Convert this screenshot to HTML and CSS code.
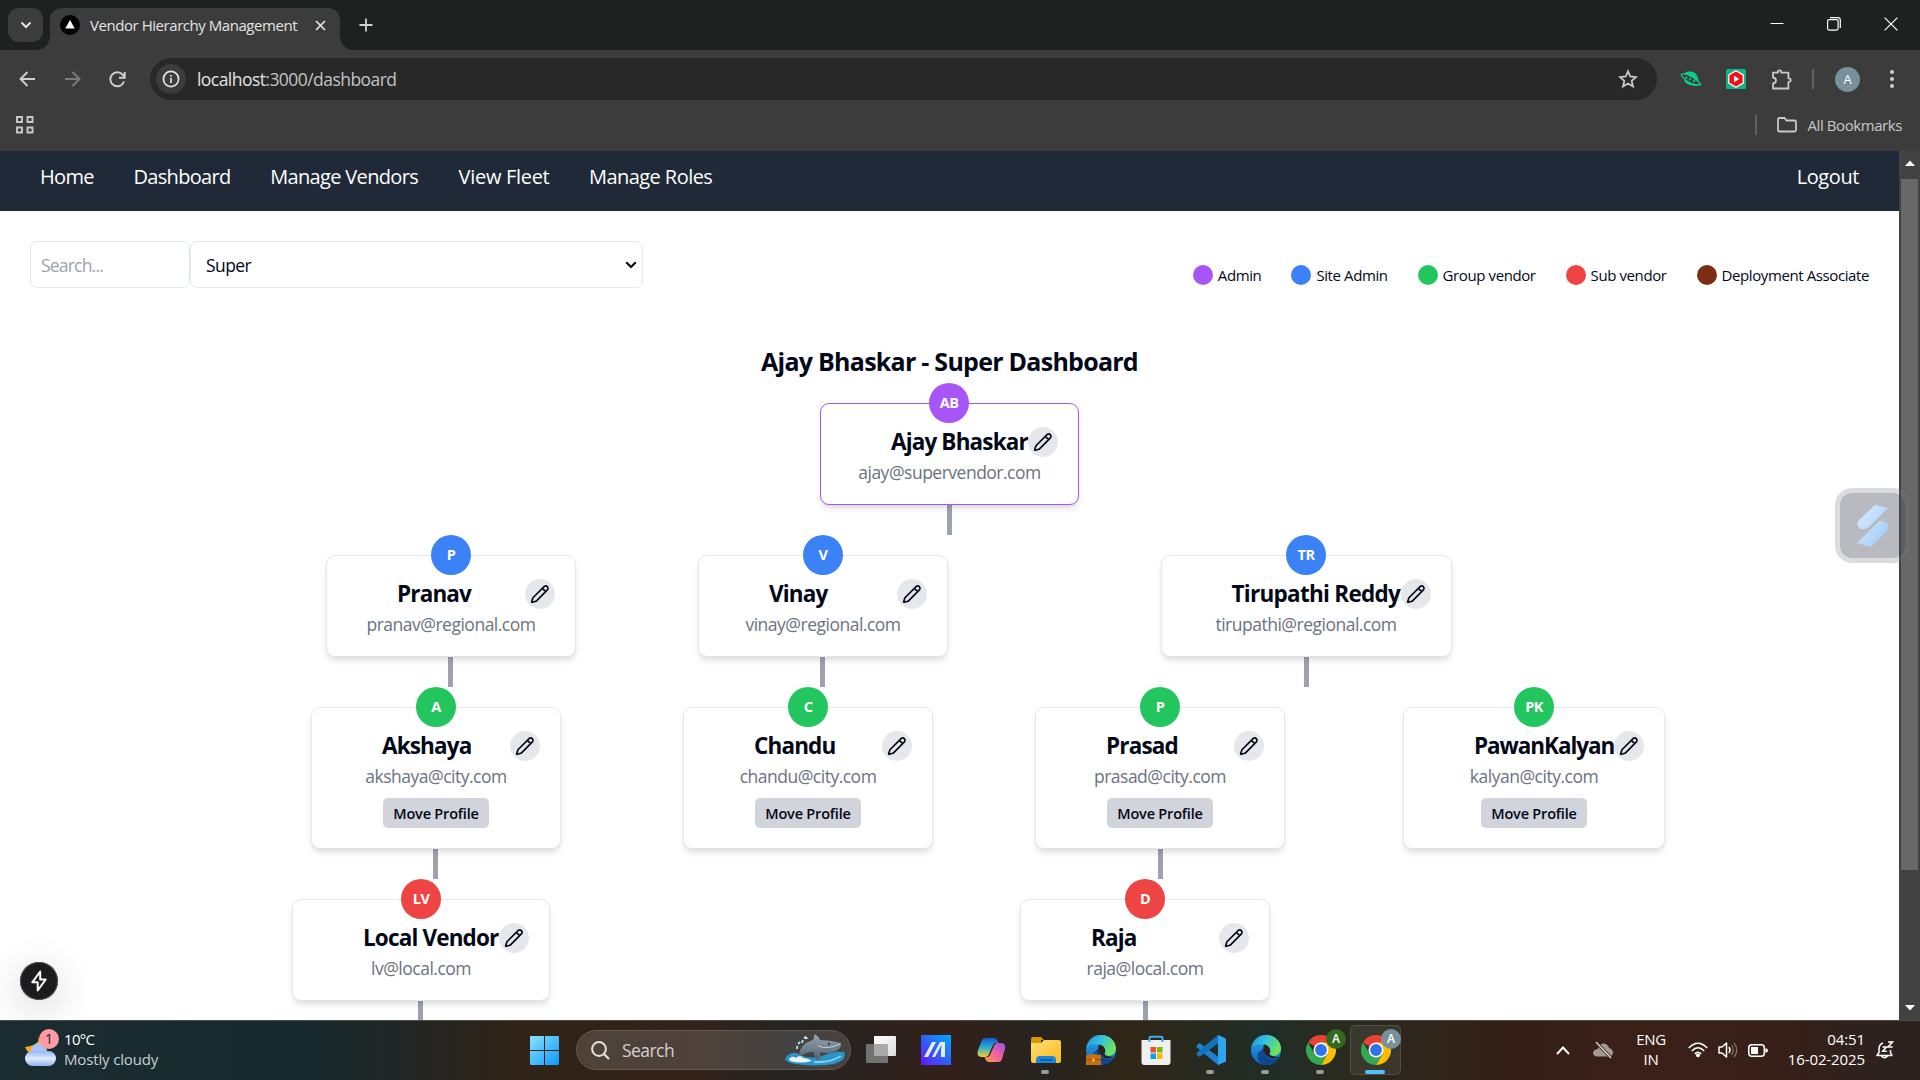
FILE: index.html
```
<!DOCTYPE html>
<html lang="en">
<head>
<meta charset="utf-8">
<title>Vendor Hierarchy Management</title>
<link rel="stylesheet" href="styles.css">
</head>
<body>
<svg class="defs" aria-hidden="true">
  <defs>
    <linearGradient id="win" x1="0" y1="0" x2="1" y2="1"><stop offset="0" stop-color="#8be3ff"/><stop offset="1" stop-color="#0a98ff"/></linearGradient>
    <linearGradient id="sky" x1="0" y1="0" x2="1" y2="1"><stop offset="0" stop-color="#dceeff"/><stop offset="1" stop-color="#9cc8f8"/></linearGradient>
    <linearGradient id="cloud" x1="0" y1="0" x2="0" y2="1"><stop offset="0" stop-color="#8fb6f3"/><stop offset=".5" stop-color="#e1ebfb"/><stop offset="1" stop-color="#8fb2ef"/></linearGradient>
    <linearGradient id="mapp" x1="0" y1="1" x2="1" y2="0"><stop offset="0" stop-color="#6418ff"/><stop offset=".5" stop-color="#2f61f6"/><stop offset="1" stop-color="#00aaff"/></linearGradient>
    <linearGradient id="cpa" x1="0" y1="0" x2="0" y2="1"><stop offset="0" stop-color="#1c56cf"/><stop offset=".45" stop-color="#23a9d8"/><stop offset="1" stop-color="#f1cf2c"/></linearGradient>
    <linearGradient id="cpb" x1="1" y1="0" x2="0" y2="1"><stop offset="0" stop-color="#9c4df0"/><stop offset=".5" stop-color="#f0619b"/><stop offset="1" stop-color="#ff9d4a"/></linearGradient>
    <linearGradient id="fold" x1="0" y1="0" x2="1" y2="1"><stop offset="0" stop-color="#ffdf73"/><stop offset="1" stop-color="#fcb91e"/></linearGradient>
    <linearGradient id="edgea" x1="0" y1="0" x2="1" y2=".4"><stop offset="0" stop-color="#1a8fe0"/><stop offset=".5" stop-color="#35c1e0"/><stop offset="1" stop-color="#6be35c"/></linearGradient>
    <linearGradient id="edgeb" x1="0" y1="0" x2="0" y2="1"><stop offset="0" stop-color="#2ea9e6"/><stop offset="1" stop-color="#0f63c0"/></linearGradient>
    <linearGradient id="whale" x1="0" y1="0" x2="0" y2="1"><stop offset="0" stop-color="#9aa6b2"/><stop offset="1" stop-color="#51606e"/></linearGradient>
    <linearGradient id="view" x1="0" y1="0" x2="1" y2="1"><stop offset="0" stop-color="#ffffff"/><stop offset="1" stop-color="#dcdcdc"/></linearGradient>
    <symbol id="pencil" viewBox="0 0 24 24"><path d="M21.17 6.81a2.9 2.9 0 0 0-4-4L3.84 16.17a2 2 0 0 0-.5.83l-1.32 4.35a.5.5 0 0 0 .62.62L7 20.66a2 2 0 0 0 .83-.5zM14.8 5.2l4 4" fill="none" stroke="#020817" stroke-width="2" stroke-linecap="round" stroke-linejoin="round"/></symbol>
    <symbol id="edge" viewBox="0 0 30 30"><circle cx="15" cy="15" r="15" fill="url(#edgeb)"/><path d="M9.5 15.5C8 23 15 29 25.500 25.700A15 15 0 0 1 12 29.700C6 27 4 19 9.500 15.500z" fill="#104f9c"/><path d="M13 29.900C7 27 7 20 10 16C11 14 13.500 13 15.500 13.500C11 18 14.500 25 26 23.500L28.700 22Q24 30 13 29.900z" fill="#0e478f"/><path d="M.3 12.500C2 4.500 8.500 0 15.500 0C24 0 30 6.500 30 13.500C30 18 26.500 21 22.500 21C19 21 18 19.500 18.700 18C20.500 14.500 17 9.500 11 9.300C6 9.200 2 11 .3 12.500z" fill="url(#edgea)"/><path d="M18.700 18C20.500 15 18 10 13 9.500C12 12 11.500 16 15 20.500Q20 25 28.500 22Q24 22 20 20.500Q17.900 19.600 18.700 18z" fill="#2b221d"/></symbol>
    <symbol id="chrome" viewBox="0 0 30 30"><path d="M15 15L2 7.500A15 15 0 0 1 28 7.500z" fill="#ea4335"/><path d="M15 7.500H28A15 15 0 0 1 15 30L21.500 18.750z" fill="#fbbc04"/><path d="M8.500 18.750L2 7.500A15 15 0 0 0 15 30L21.500 18.750z" fill="#34a853"/><circle cx="15" cy="15" r="7.500" fill="#fff"/><circle cx="15" cy="15" r="5.900" fill="#2f73e8"/></symbol>
  </defs>
</svg>

<div class="screen">
  <header class="browser">
    <div class="tabstrip">
      <button class="tab-list"><svg width="12" height="8" viewBox="0 0 12 8"><path d="M1.500 1.500L6 6l4.500-4.500" fill="none" stroke="#e3e3e3" stroke-width="2"/></svg></button>
      <div class="tab">
        <svg class="favicon" width="20" height="20" viewBox="0 0 20 20"><circle cx="10" cy="10" r="10"/><path d="M10 5l4.800 8.400H5.200z" fill="#fff"/></svg>
        <span class="tab-title">Vendor Hierarchy Management</span>
        <svg class="tab-close" width="11" height="11" viewBox="0 0 11 11"><path d="M1 1l9 9M10 1l-9 9" stroke="#e3e3e3" stroke-width="1.700"/></svg>
      </div>
      <svg class="tab-new" width="14" height="14" viewBox="0 0 14 14"><path d="M7 .5v13M.5 7h13" stroke="#d0d0d0" stroke-width="1.800"/></svg>
      <div class="window-controls">
        <svg width="14" height="14" viewBox="0 0 14 14"><path d="M.5 6.500h13" stroke="#fff"/></svg>
        <svg width="14" height="14" viewBox="0 0 14 14"><rect x=".6" y="2.600" width="10.500" height="10.500" rx="1.500" fill="none" stroke="#fff" stroke-width="1.200"/><path d="M3 .6h8q2.300 0 2.300 2.300v8" fill="none" stroke="#fff" stroke-width="1.200"/></svg>
        <svg width="14" height="14" viewBox="0 0 14 14"><path d="M.6.600l12.800 12.800M13.400.600L.6 13.400" stroke="#fff" stroke-width="1.200"/></svg>
      </div>
    </div>
    <div class="toolbar">
      <svg class="nav-ico" width="17" height="16" viewBox="0 0 17 16"><path d="M16 8H1.500M8.500 1L1.500 8l7 7" fill="none" stroke="#d0d0d0" stroke-width="1.900"/></svg>
      <svg class="nav-ico" width="17" height="16" viewBox="0 0 17 16"><path d="M1 8h14.500M8.500 1l7 7-7 7" fill="none" stroke="#7c7c7c" stroke-width="1.900"/></svg>
      <svg class="nav-ico" width="17" height="17" viewBox="0 0 17 17"><path d="M15 10.500A7 7 0 1 1 13.700 3.700L15.500 6M15.700 1v5.800H10" fill="none" stroke="#d0d0d0" stroke-width="1.900"/></svg>
      <div class="address">
        <span class="site-info"><svg width="18" height="18" viewBox="0 0 18 18"><circle cx="9" cy="9" r="7.600" fill="none" stroke="#e3e3e3" stroke-width="1.700"/><path d="M9 8v5M9 5v1.700" stroke="#e3e3e3" stroke-width="1.700"/></svg></span>
        <span class="url">localhost<span>:3000/dashboard</span></span>
        <svg class="star" width="20" height="20" viewBox="0 0 20 20"><path d="M10 2.300l2.300 5.200 5.700.6-4.300 3.800 1.300 5.600-5-3-5 3 1.300-5.600L2 8.100l5.700-.6z" fill="none" stroke="#c8c8c8" stroke-width="1.800"/></svg>
      </div>
      <div class="extensions">
        <svg width="22" height="16" viewBox="0 0 22 16"><path d="M4 4Q4.500.800 9 .600Q17 0 18.500 9L20 14Q15 16 8.500 13.500Q4 11.500 4 8z" fill="#0fc98c"/><path d="M1.200 3.500Q4.500 1.500 13 6.500Q19 10.500 20.800 13.700Q14 14.500 7 10Q1.500 6 1.200 3.500z" fill="#3c3c3c" stroke="#0fc98c" stroke-width="1.300"/><path d="M5.500 5.500l1.500 2M9.500 7l1 2.200M13.500 9l1 2" stroke="#0fc98c" stroke-width="1.800"/></svg>
        <svg class="ext-video" width="20" height="20" viewBox="0 0 20 20"><rect width="20" height="20" rx="1.500" fill="#0fb389"/><path d="M10 1.800l7.200 4.100v8.200L10 18.200l-7.200-4.100V5.900z" fill="#f50d17" stroke="#fff" stroke-width="1.200"/><path d="M8 6.800l5.300 3.200L8 13.200z" fill="#fff"/></svg>
        <svg class="ext-menu" width="21" height="21" viewBox="0 0 21 21"><path d="M2 3.700h4.800v-.5a1.800 1.800 0 0 1 3.600 0v.5h7v5.700h.5a1.800 1.800 0 0 1 0 3.600h-.5v6.500H2v-5q3-.4 3-3t-3-3z" fill="none" stroke="#c8c8c8" stroke-width="1.800" stroke-linejoin="round"/></svg>
        <i class="divider"></i>
        <span class="profile">A</span>
        <svg width="4" height="18" viewBox="0 0 4 18"><g fill="#d0d0d0"><circle cx="2" cy="2" r="2"/><circle cx="2" cy="9" r="2"/><circle cx="2" cy="16" r="2"/></g></svg>
      </div>
    </div>
    <div class="bookmarks">
      <svg width="20" height="20" viewBox="0 0 20 20"><g fill="none" stroke="#c8c8c8" stroke-width="1.900"><path d="M2 2h5v5H2zM12.500 2h5v5h-5zM2 12.500h5v5H2zM12.500 12.500h5v5h-5z"/></g></svg>
      <div class="all-bookmarks">
        <i class="divider"></i>
        <svg width="20" height="16" viewBox="0 0 20 16"><path d="M1 2.500Q1 1 2.500 1h5l2 2.500h8q1.500 0 1.500 1.500v8q0 1.500-1.500 1.500h-15Q1 14.500 1 13z" fill="none" stroke="#c8c8c8" stroke-width="1.800"/></svg>
        <span>All Bookmarks</span>
      </div>
    </div>
  </header>

  <div class="viewport">
    <main class="page">
      <nav class="navbar">
        <a>Home</a><a>Dashboard</a><a>Manage Vendors</a><a class="fleet">View Fleet</a><a>Manage Roles</a>
        <a class="logout">Logout</a>
      </nav>
      <section class="filters">
        <div class="search">Search...</div>
        <div class="select">Super<svg width="12" height="8" viewBox="0 0 12 8"><path d="M1.200 1.200L6 6l4.800-4.800" fill="none" stroke="#020817" stroke-width="2.200"/></svg></div>
        <ul class="legend">
          <li><i class="purple"></i>Admin</li>
          <li><i class="blue"></i>Site Admin</li>
          <li><i class="green"></i>Group vendor</li>
          <li><i class="red"></i>Sub vendor</li>
          <li><i class="brown"></i>Deployment Associate</li>
        </ul>
      </section>
      <h1>Ajay Bhaskar - Super Dashboard</h1>

      <div class="tree">
        <article class="card card-root">
          <span class="badge purple">AB</span>
          <div class="name"><h2>Ajay Bhaskar</h2><button class="edit"><svg><use href="#pencil"/></svg></button></div>
          <p>ajay@supervendor.com</p>
        </article>
        <i class="link"></i>

        <div class="regions">
          <div class="branch branch-pranav">
            <article class="card">
              <span class="badge blue">P</span>
              <div class="name"><h2>Pranav</h2><button class="edit"><svg><use href="#pencil"/></svg></button></div>
              <p>pranav@regional.com</p>
            </article>
            <i class="link"></i>
            <div class="children">
              <div class="branch">
                <article class="card tall">
                  <span class="badge green">A</span>
                  <div class="name"><h2>Akshaya</h2><button class="edit"><svg><use href="#pencil"/></svg></button></div>
                  <p>akshaya@city.com</p>
                  <button class="move">Move Profile</button>
                </article>
                <i class="link"></i>
                <div class="children">
                  <div class="branch">
                    <article class="card card-local">
                      <span class="badge red">LV</span>
                      <div class="name"><h2>Local Vendor</h2><button class="edit"><svg><use href="#pencil"/></svg></button></div>
                      <p>lv@local.com</p>
                    </article>
                    <i class="link"></i>
                  </div>
                </div>
              </div>
            </div>
          </div>

          <div class="branch branch-vinay">
            <article class="card">
              <span class="badge blue">V</span>
              <div class="name"><h2>Vinay</h2><button class="edit"><svg><use href="#pencil"/></svg></button></div>
              <p>vinay@regional.com</p>
            </article>
            <i class="link"></i>
            <div class="children">
              <div class="branch">
                <article class="card tall">
                  <span class="badge green">C</span>
                  <div class="name"><h2>Chandu</h2><button class="edit"><svg><use href="#pencil"/></svg></button></div>
                  <p>chandu@city.com</p>
                  <button class="move">Move Profile</button>
                </article>
              </div>
            </div>
          </div>

          <div class="branch branch-reddy">
            <article class="card card-reddy">
              <span class="badge blue">TR</span>
              <div class="name"><h2>Tirupathi Reddy</h2><button class="edit"><svg><use href="#pencil"/></svg></button></div>
              <p>tirupathi@regional.com</p>
            </article>
            <i class="link"></i>
            <div class="siblings">
              <div class="branch branch-prasad">
                <article class="card tall">
                  <span class="badge green">P</span>
                  <div class="name"><h2>Prasad</h2><button class="edit"><svg><use href="#pencil"/></svg></button></div>
                  <p>prasad@city.com</p>
                  <button class="move">Move Profile</button>
                </article>
                <i class="link"></i>
                <div class="children">
                  <div class="branch">
                    <article class="card">
                      <span class="badge red">D</span>
                      <div class="name"><h2>Raja</h2><button class="edit"><svg><use href="#pencil"/></svg></button></div>
                      <p>raja@local.com</p>
                    </article>
                    <i class="link"></i>
                  </div>
                </div>
              </div>
              <div class="branch">
                <article class="card tall card-kalyan">
                  <span class="badge green">PK</span>
                  <div class="name"><h2>PawanKalyan</h2><button class="edit"><svg><use href="#pencil"/></svg></button></div>
                  <p>kalyan@city.com</p>
                  <button class="move">Move Profile</button>
                </article>
              </div>
            </div>
          </div>
        </div>
      </div>
      <button class="dev-tools"><svg width="16" height="22" viewBox="0 0 16 22"><path d="M9.200 1.500L1.300 12.300h5.400v8.200l8-11H9.200z" fill="none" stroke="#fff" stroke-width="2" stroke-linejoin="round"/></svg></button>
    </main>
    <div class="scrollbar">
      <svg width="10" height="6" viewBox="0 0 10 6"><path d="M0 6l5-5.500L10 6z" fill="#fff"/></svg>
      <i></i>
      <svg width="10" height="6" viewBox="0 0 10 6"><path d="M0 0l5 5.500L10 0z" fill="#fff"/></svg>
    </div>
    <div class="widget"><svg width="32" height="42" viewBox="0 0 32 42"><path d="M18 0L31 3L12 22Q9 25 4 24Q-1 21 1 16zM22 16Q30 16 31 20Q31 25 28 28L14 42L0 38z" fill="url(#sky)"/></svg></div>
  </div>

  <footer class="taskbar">
    <div class="weather">
      <svg width="32" height="34" viewBox="0 0 32 34"><path d="M12 1Q18 12 0 14Q3 22 12 22Q20 16 12 1z" fill="#f7a81d"/><circle cx="14" cy="18" r="8" fill="#a9c5f5"/><rect x="0" y="18" width="31" height="15" rx="7.500" fill="url(#cloud)"/></svg>
      <span class="count">1</span>
      <div><b>10°C</b><span>Mostly cloudy</span></div>
    </div>
    <svg class="start" width="29" height="29" viewBox="0 0 29 29"><path d="M0 1Q0 0 1 0h13v14H0zM15 0h13q1 0 1 1v13H15zM0 15h14v14H1q-1 0-1-1zM15 15h14v13q0 1-1 1H15z" fill="url(#win)"/></svg>
    <div class="taskbar-search">
      <svg width="19" height="19" viewBox="0 0 19 19"><circle cx="8" cy="8" r="6.900" fill="none" stroke="#e6e2df" stroke-width="2"/><path d="M13 13l5 5" stroke="#e6e2df" stroke-width="2.200"/></svg>
      <span>Search</span>
      <svg class="whale" width="62" height="32" viewBox="0 0 62 32"><path d="M1 25Q6 16 15 20Q25 26 38 22Q50 17 60 18Q64 26 50 30Q30 33 12 30Q3 29 1 25z" fill="#2a93c8"/><path d="M15 23Q15 10 29 6Q31 2 30 0Q35 2 36 6Q46 6 57 9Q58 15 50 18Q44 20 36 18Q38 25 33 26Q29 20 30 18Q22 18 15 23z" fill="url(#whale)"/><path d="M34 12Q44 16 56 10" fill="none" stroke="#c6ced6"/><circle cx="45" cy="10" r="1" fill="#222"/><path d="M5 25q3-4 7-1q4-4 7 0q5 0 9 3q-12 3-22 0z" fill="#e8f6fb"/><path d="M13 15q0-5 4-8M18 9q1-5 5-7M21 3l3 2" fill="none" stroke="#bfe4f2" stroke-width="1.800" stroke-dasharray="3 2"/><path d="M30 28Q46 29 57 22" fill="none" stroke="#79d3f2" stroke-width="2"/></svg>
    </div>
    <div class="apps">
      <div class="app"><svg width="30" height="30" viewBox="0 0 30 30"><rect x="0" y="9" width="22" height="19" rx="1" fill="#727272"/><rect x="8" y="1" width="22" height="20" rx="1" fill="url(#view)"/><path d="M8 9h14v12H8z" fill="#aaa"/></svg></div>
      <div class="app"><svg width="30" height="30" viewBox="0 0 30 30"><path d="M0 0h30v30H0z" fill="url(#mapp)"/><path d="M3 22L11 7h4L7 22zM11 22L19 7h3L14 22zM21 7h3v15h-4v-7z" fill="#e8ecff"/></svg></div>
      <div class="app"><svg width="30" height="30" viewBox="0 0 30 30"><path d="M6 5Q7 3 10 3h8q3 0 4 4l1 1q-5-1-6 2l-4 9q-1 3-4 3H5q-5-1-3-7z" fill="url(#cpa)"/><path d="M26 24Q25 27 22 27h-9q-3 0-4-4l-1-1q5 1 6-2l4-9q1-3 4-3h4q4 1 3 6z" fill="url(#cpb)"/></svg></div>
      <div class="app open"><svg width="30" height="30" viewBox="0 0 30 30"><path d="M0 4q0-2 2-2h8l3 3h-3v6H0z" fill="#d9960b"/><path d="M0 8h10l3-3h15q2 0 2 2v19q0 2-2 2H2q-2 0-2-2z" fill="url(#fold)"/><path d="M5 28v-3q0-4 4-4h12q4 0 4 4v3z" fill="#1c86d8"/><path d="M9 25h12" stroke="#0f559f" stroke-width="1.500"/></svg></div>
      <div class="app"><svg width="30" height="30" viewBox="0 0 30 30"><use href="#edge" width="30" height="30"/><path d="M0 20h4v-1h7v1h4v10H0z" fill="#c3700e"/><path d="M0 24.500h15" stroke="#8d4a05"/><path d="M6.500 23.500h2v3h-2z" fill="#ffd54a"/></svg></div>
      <div class="app"><svg width="30" height="30" viewBox="0 0 30 30"><path d="M.500 5h29v22q0 3-3 3h-23q-3 0-3-3z" fill="#efefef"/><path d="M8.500 7V2.800q0-1 1-1h11q1 0 1 1V7" fill="none" stroke="#37aee8" stroke-width="2"/><path d="M9.500 12H15v5.500H9.500z" fill="#f25022"/><path d="M16 12h5.500v5.500H16z" fill="#7fba00"/><path d="M9.500 18.500H15V24H9.500z" fill="#00a4ef"/><path d="M16 18.500h5.500V24H16z" fill="#ffb900"/></svg></div>
      <div class="app open"><svg width="30" height="30" viewBox="0 0 30 30"><path d="M1 10l2.500-2L22 21.500V30L1 12.500Q0 11 1 10z" fill="#1b82cf"/><path d="M1 20l2.500 2L22 8.500V0L1 17.500Q0 19 1 20z" fill="#1373bd"/><path d="M22 0l7 3q1 .5 1 1.500v21q0 1-1 1.500l-7 3z" fill="#2fa5ee"/></svg></div>
      <div class="app open"><svg width="30" height="30"><use href="#edge"/></svg></div>
      <div class="app open"><svg width="30" height="30"><use href="#chrome"/></svg><span class="user green-user">A</span></div>
      <div class="app open active"><svg width="30" height="30"><use href="#chrome"/></svg><span class="user">A</span></div>
    </div>
    <div class="tray">
      <svg width="14" height="9" viewBox="0 0 14 9"><path d="M1 8l6-6.500L13 8" fill="none" stroke="#fff" stroke-width="1.900"/></svg>
      <svg class="cloud-off" width="20" height="17" viewBox="0 0 20 17"><path d="M4 14.500Q0 14 0 10.500Q1 7 5 7Q6 1.500 11 1.500Q15 2 16 6Q20 7 20 11Q19 14.500 16 14.500z" fill="#a39a96"/><path d="M3 0l15 16" stroke="#3a1f17" stroke-width="3"/><path d="M3 0l15 16" stroke="#e8e4e2" stroke-width="1.300"/></svg>
      <div class="lang"><span>ENG</span><span>IN</span></div>
      <svg class="wifi" width="20" height="16" viewBox="0 0 20 16"><g fill="none" stroke="#fff" stroke-width="1.600"><path d="M.800 6Q10-3.500 19.200 6M3.800 9Q10 2.500 16.200 9M6.800 12Q10 8.500 13.200 12"/></g><circle cx="10" cy="13.300" r="2" fill="#fff"/></svg>
      <svg class="speaker" width="20" height="16" viewBox="0 0 20 16"><path d="M1 5h3l4.500-4v14L4 11H1z" fill="none" stroke="#fff" stroke-width="1.500" stroke-linejoin="round"/><path d="M11 5q2 3 0 6" fill="none" stroke="#fff" stroke-width="1.500"/><path d="M13.500 3q3.500 5 0 10M16 .800q5.500 7 0 14.400" fill="none" stroke="#85736d" stroke-width="1.300"/></svg>
      <svg class="battery" width="20" height="13" viewBox="0 0 20 13"><rect x=".8" y=".8" width="15.500" height="11.400" rx="3" fill="none" stroke="#fff" stroke-width="1.500"/><path d="M3 3h7v7H3z" fill="#fff"/><path d="M17.300 4.500h1.500l1 1v2l-1 1h-1.500z" fill="#fff"/></svg>
      <div class="clock"><span>04:51</span><span>16-02-2025</span></div>
      <svg class="bell" width="18" height="18" viewBox="0 0 18 18"><path d="M7 2Q3 3.500 3 8v3.500L1 14.500h15L14.500 11.500V9M5.500 15q3 3.500 6 0" fill="none" stroke="#fff" stroke-width="1.500" stroke-linejoin="round"/><path d="M6.500 6h3.800L6.800 10.300h4M12 1h4.500L12 6h4.700" fill="none" stroke="#fff" stroke-width="1.500"/></svg>
    </div>
  </footer>
</div>
</body>
</html>
```
FILE: styles.css
```
* { box-sizing: border-box; }
body { margin: 0; font-family: "Open Sans", "Noto Sans", sans-serif; color: #020817; }
h1, h2, p, ul { margin: 0; padding: 0; }
button { border: 0; padding: 0; font: inherit; color: inherit; }
svg { display: block; flex: none; }
.defs { position: absolute; width: 0; height: 0; }
.screen { width: 1920px; height: 1080px; overflow: hidden; display: flex; flex-direction: column; background: #fff; }

/* browser frame */
.browser { height: 151px; flex: none; background: #3c3c3c; }
.tabstrip { height: 50px; background: #1f2121; display: flex; align-items: flex-start; padding: 8px 22px 0 8px; }
.tab-list { width: 35px; height: 34px; border-radius: 11px; background: #3c3c3c; display: grid; place-items: center; }
.tab { width: 290px; height: 42px; margin-left: 7px; padding: 0 14px 8px 10px; border-radius: 12px 12px 0 0; background: #3c3c3c; display: flex; align-items: center; position: relative; }
.tab::before, .tab::after { content: ""; position: absolute; bottom: 0; width: 13px; height: 13px; }
.tab::before { left: -13px; background: radial-gradient(circle at 0 0, transparent 12.500px, #3c3c3c 13px); }
.tab::after { right: -13px; background: radial-gradient(circle at 100% 0, transparent 12.500px, #3c3c3c 13px); }
.tab-title { margin-left: 10px; font-size: 15px; letter-spacing: -.45px; color: #e3e3e3; white-space: nowrap; }
.tab-close { margin-left: auto; }
.tab-new { margin: 10px 0 0 19px; }
.window-controls { margin: 9px 0 0 auto; display: flex; gap: 43px; }
.toolbar { height: 58px; display: flex; align-items: center; padding: 0 0 0 19px; }
.nav-ico { margin-right: 28px; }
.address { width: 1507px; height: 42px; margin-left: -4px; border-radius: 21px; background: #282828; display: flex; align-items: center; padding: 0 19px 0 6px; }
.site-info { width: 30px; height: 30px; border-radius: 50%; background: #3c3c3c; display: grid; place-items: center; }
.url { margin-left: 11px; font-size: 17.500px; letter-spacing: -.55px; color: #e3e3e3; }
.url span { color: #c0c3c6; }
.star { margin-left: auto; }
.extensions { display: flex; align-items: center; margin-left: 23px; }
.ext-video { margin-left: 24px; }
.ext-menu { margin: 0 20px 0 25px; }
.divider { width: 2px; height: 20px; background: #606060; }
.profile { width: 25px; height: 25px; margin: 0 30px 0 21px; border-radius: 50%; background: #78909c; color: #fff; font-size: 13px; display: grid; place-items: center; }
.bookmarks { height: 43px; display: flex; align-items: center; justify-content: space-between; padding: 0 18px 9px 15px; }
.all-bookmarks { display: flex; align-items: center; color: #c8c8c8; font-size: 15px; letter-spacing: -.42px; }
.all-bookmarks svg { margin: 0 11px 0 20px; }

/* page */
.viewport { height: 869px; flex: none; display: flex; position: relative; overflow: hidden; }
.page { width: 1899px; height: 869px; overflow: hidden; position: relative; }
.navbar { height: 60px; background: #1f2937; color: #fff; display: flex; gap: 39.500px; padding: 12px 40px 0; font-size: 20px; line-height: 28px; letter-spacing: -.66px; white-space: nowrap; }
.fleet { letter-spacing: -.3px; margin-left: 1px; }
.fleet + a { letter-spacing: -.55px; }
.logout { margin-left: auto; letter-spacing: -.4px; }
.filters { height: 77px; padding: 30px 30px 0; display: flex; }
.search, .select { height: 47px; border: 1px solid #e2e8f0; border-radius: 7px; display: flex; align-items: center; font-size: 17.500px; }
.search { width: 160px; padding-left: 10px; color: #9ca3af; letter-spacing: -.8px; }
.select { width: 453px; padding: 0 5px 0 15px; justify-content: space-between; letter-spacing: -.6px; }
.legend { margin: 24px 0 0 auto; height: 20px; display: flex; gap: 30px; list-style: none; font-size: 15px; letter-spacing: -.4px; white-space: nowrap; }
.legend li { display: flex; align-items: center; gap: 5px; }
.legend i { width: 20px; height: 20px; border-radius: 50%; }
h1 { margin-top: 56px; height: 35px; font-size: 25px; line-height: 35px; font-weight: 700; letter-spacing: -.74px; text-align: center; }

/* hierarchy */
.tree { margin-top: 24px; display: flex; flex-direction: column; align-items: center; }
.card { width: 250px; height: 102px; flex: none; border: 1px solid #e2e8f0; border-radius: 9px; background: #fff; box-shadow: 0 5px 7px -1px rgba(0,0,0,.1), 0 2px 4px -2px rgba(0,0,0,.1); padding: 23px 20px 0; position: relative; display: flex; flex-direction: column; align-items: center; }
.card.tall { height: 142px; }
.card-root { width: 259px; border-color: #a855f7; }
.card-reddy { width: 291px; }
.card-local { width: 258px; }
.card-kalyan { width: 262px; }
.card-kalyan h2 { letter-spacing: -1.070px; }
.card-reddy h2 { letter-spacing: -.72px; }
.badge { position: absolute; top: -21px; left: calc(50% - 20px); width: 40px; height: 40px; padding-bottom: 1px; border-radius: 50%; color: #fff; font-size: 14.500px; font-weight: 700; letter-spacing: -.5px; display: grid; place-items: center; }
.card-root .badge { left: calc(50% - 20.500px); }
.name { align-self: stretch; margin-left: 50px; height: 30px; display: flex; align-items: center; justify-content: space-between; }
h2 { font-size: 22.500px; line-height: 30px; font-weight: 700; letter-spacing: -.85px; white-space: nowrap; }
.edit { width: 30px; height: 30px; flex: none; border-radius: 50%; background: #e5e7eb; display: grid; place-items: center; }
.edit svg { width: 20px; height: 20px; }
.card p { margin-top: 3px; font-size: 17.500px; line-height: 25px; letter-spacing: -.5px; color: #6b7280; white-space: nowrap; }
.move { width: 106px; height: 30px; margin-top: 9px; border-radius: 5px; background: #d1d5db; font-size: 14.500px; font-weight: 600; letter-spacing: -.2px; }
.link { width: 5px; height: 30px; flex: none; background: #9ca3af; }
.branch-pranav .link, .branch-vinay .link { margin-left: -1px; }
.regions { align-self: flex-start; margin-top: 20px; display: flex; align-items: flex-start; }
.branch { display: flex; flex-direction: column; align-items: center; }
.children, .siblings { margin-top: 20px; display: flex; justify-content: center; }
.children { align-self: stretch; padding-right: 30px; }
.children > .branch { width: 250px; flex: none; }
.branch-pranav { width: 280px; margin-left: 311px; }
.branch-vinay { width: 280px; margin-left: 92px; }
.branch-reddy { width: 686px; }
.siblings { align-self: flex-start; margin-left: 57px; gap: 103px; align-items: flex-start; }
.branch-prasad { width: 280px; }
.purple { background: #a855f7; }
.blue { background: #3b82f6; }
.green { background: #22c55e; }
.red { background: #ef4444; }
.brown { background: #7c2d12; }
.dev-tools { position: absolute; left: 20px; top: 811px; width: 38px; height: 38px; border-radius: 50%; background: #1c1c1e; display: grid; place-items: center; box-shadow: inset 0 0 0 1px #555, 0 10px 40px rgba(0,0,0,.2); }
.scrollbar { width: 21px; background: #424242; display: flex; flex-direction: column; align-items: center; padding: 9px 0; }
.scrollbar i { width: 17px; height: 691px; margin-top: 13px; background: #686868; }
.scrollbar svg:last-child { margin-top: auto; }
.widget { position: absolute; left: 1835px; top: 337px; width: 75px; height: 75px; border-radius: 17px; border: 5px solid rgba(110,115,130,.25); background: rgba(75,78,92,.39); background-clip: padding-box; display: grid; place-items: center; }

/* taskbar */
.taskbar { height: 60px; flex: none; display: flex; align-items: center; padding-bottom: 1px; border-top: 1px solid #4a4d45; color: #fff; font-size: 15px; background: linear-gradient(90deg, #1a2c30 0, #172a2e 300px, #222726 400px, #302317 520px, #33221a 690px, #252423 790px, #33201a 950px, #26241f 1040px, #302617 1130px, #1f2d26 1270px, #2b2a1f 1350px, #332018 1500px, #3b2018 1640px, #372018 1780px, #2a2220 1920px); }
.weather { width: 505px; padding-left: 25px; display: flex; align-items: center; position: relative; line-height: 20px; }
.weather div { margin: -2px 0 0 7px; display: flex; flex-direction: column; }
.weather b { font-weight: 400; letter-spacing: -.7px; }
.weather div span { color: #c9cfcf; letter-spacing: -.15px; }
.count { position: absolute; left: 39px; top: -2px; width: 20px; height: 20px; border-radius: 50%; background: #ff99a4; color: #222; font-size: 14px; display: grid; place-items: center; }
.start { margin-left: 25px; }
.taskbar-search { width: 275px; height: 40px; margin-left: 17px; border: 1px solid #665650; border-radius: 20px; background: rgba(255,255,255,.14); display: flex; align-items: center; padding: 0 4px 0 14px; font-size: 17.500px; letter-spacing: -.55px; color: #d5d0cd; }
.taskbar-search span { margin-left: 12px; }
.whale { margin-left: auto; }
.apps { margin-left: 2px; display: flex; }
.app { width: 55px; height: 50px; display: grid; place-items: center; position: relative; }
.open::after { content: ""; position: absolute; bottom: 1px; left: 23px; width: 8px; height: 4px; border-radius: 2px; background: #9a9a96; }
.active::before { content: ""; position: absolute; inset: 0 2px 0 2px; border: 1px solid rgba(255,255,255,.12); border-radius: 5px; background: rgba(255,255,255,.07); }
.active::after { left: 17px; width: 20px; background: #4cc2ff; }
.app svg { position: relative; }
.user { position: absolute; right: 2px; top: 4px; width: 20px; height: 20px; border-radius: 50%; background: #78909c; color: #fff; font-size: 12px; font-weight: 600; line-height: 20px; text-align: center; }
.green-user { background: #33691e; }
.tray { margin-left: auto; display: flex; align-items: center; padding-right: 26px; line-height: 20px; }
.cloud-off { margin-left: 23px; }
.lang { width: 30px; margin: -2px 0 0 23px; display: flex; flex-direction: column; align-items: center; letter-spacing: -.3px; }
.wifi { margin-left: 22px; }
.speaker { margin-left: 10px; }
.battery { margin-left: 10px; }
.clock { width: 78px; margin: -3px 0 0 19px; display: flex; flex-direction: column; align-items: flex-end; letter-spacing: -.1px; }
.bell { margin-left: 11px; }
```
